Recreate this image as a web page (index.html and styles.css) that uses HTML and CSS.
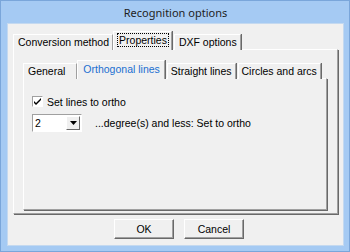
FILE: index.html
```html
<!DOCTYPE html>
<html lang="en">
<head>
    <meta charset="UTF-8">
    <title>Recognition options</title>
    <link rel="stylesheet" href="styles.css">
</head>
<body>
    <div class="window">
        <div class="titlebar">Recognition options</div>
        <div class="client">
            <div class="tabs outer-tabs">
                <div class="tab first">Conversion method</div>
                <div class="tab active"><span class="focus">Properties</span></div>
                <div class="tab">DXF options</div>
            </div>
            <div class="panel outer-panel">
                <div class="tabs inner-tabs">
                    <div class="tab first">General</div>
                    <div class="tab active blue">Orthogonal lines</div>
                    <div class="tab">Straight lines</div>
                    <div class="tab">Circles and arcs</div>
                </div>
                <div class="panel inner-panel">
                    <label class="check-row">
                        <span class="checkbox">
                            <svg width="9" height="9" viewBox="0 0 9 9"><path d="M1 4 L3 6 L8 1 L8 3 L3 8 L1 6 Z" fill="#000"/></svg>
                        </span>
                        Set lines to ortho
                    </label>
                    <div class="combo-row">
                        <div class="combo">
                            <span class="combo-value">2</span>
                            <span class="combo-btn">
                                <svg width="7" height="4" viewBox="0 0 7 4"><path d="M0 0 H7 L3.5 4 Z" fill="#000"/></svg>
                            </span>
                        </div>
                        <span class="combo-label">...degree(s) and less: Set to ortho</span>
                    </div>
                </div>
            </div>
            <div class="buttons">
                <div class="button">OK</div>
                <div class="button">Cancel</div>
            </div>
        </div>
    </div>
</body>
</html>
```

FILE: styles.css
```css
body {
    margin: 0;
    font-family: "Liberation Sans", Arial, sans-serif;
    font-size: 10.5px;
    color: #000;
}
.window {
    width: 350px;
    height: 252px;
    box-sizing: border-box;
    background-color: #a5caf3;
    border: 1px solid #7aa6da;
    padding: 0 5px 5px 6px;
    display: flex;
    flex-direction: column;
}
.titlebar {
    height: 22px;
    line-height: 23px;
    text-align: center;
    font-family: "Noto Sans", sans-serif;
    font-size: 11px;
    color: #1e1e1e;
    flex-shrink: 0;
}
.client {
    flex: 1;
    background-color: #f0f0f0;
    border: 1px solid #c4d9f0;
    padding: 9px 0 0 5px;
    display: flex;
    flex-direction: column;
}
.tabs {
    display: flex;
    height: 17px;
    align-items: flex-end;
    position: relative;
    z-index: 1;
    margin-bottom: -1px;
    flex-shrink: 0;
}
.tab {
    height: 15px;
    line-height: 15px;
    padding: 0 4px;
    border-top: 1px solid #fff;
    border-left: 1px solid #fff;
    border-right: 1px solid #a0a0a0;
    box-shadow: 1px 0 0 #696969;
    margin-right: 2px;
    background-color: #f0f0f0;
    white-space: nowrap;
}
.tab.active {
    height: 18px;
    line-height: 17px;
    margin: 0 2px 0 -2px;
    padding: 0 3px 0 4px;
}
.outer-tabs .tab {
    padding: 0 3px 0 4px;
}
.tab.blue {
    color: #1a6fd1;
}
.focus {
    outline: 1px dotted #000;
    outline-offset: 0;
    padding: 0 1px;
}
.panel {
    border-top: 1px solid #fff;
    border-left: 1px solid #fff;
    border-right: 1px solid #a0a0a0;
    border-bottom: 1px solid #a0a0a0;
    box-shadow: 1px 1px 0 #696969;
    box-sizing: border-box;
    flex-shrink: 0;
}
.outer-panel {
    width: 325px;
    height: 165px;
    padding: 12px 0 0 9px;
}
.inner-tabs .tab {
    padding: 0 3px 0 3px;
}
.inner-tabs .tab.first {
    padding-left: 4px;
    padding-right: 11px;
}
.inner-tabs .tab.active {
    padding: 0 4px 0 5px;
}
.inner-panel {
    width: 304px;
    height: 132px;
    padding: 16px 0 0 8px;
}
.check-row {
    display: flex;
    align-items: center;
    height: 13px;
}
.checkbox {
    width: 11px;
    height: 11px;
    box-sizing: border-box;
    border: 1px solid #fff;
    border-top-color: #a0a0a0;
    border-left-color: #a0a0a0;
    background-color: #fff;
    margin-right: 4px;
    display: flex;
    align-items: center;
    justify-content: center;
}
.combo-row {
    display: flex;
    align-items: center;
    margin-top: 6px;
}
.combo {
    width: 50px;
    height: 18px;
    box-sizing: border-box;
    background-color: #fff;
    border: 1px solid #a0a0a0;
    border-right-color: #fff;
    border-bottom-color: #fff;
    display: flex;
    align-items: center;
    margin-right: 13px;
}
.combo-value {
    flex: 1;
    padding-left: 2px;
}
.combo-btn {
    width: 14px;
    height: 14px;
    box-sizing: border-box;
    margin-right: 1px;
    background-color: #f0f0f0;
    border: 1px solid #fff;
    border-right-color: #696969;
    border-bottom-color: #696969;
    display: flex;
    align-items: center;
    justify-content: center;
}
.buttons {
    display: flex;
    justify-content: center;
    gap: 10px;
    margin-top: 5px;
    padding-left: 2px;
}
.button {
    width: 60px;
    height: 20px;
    line-height: 18px;
    box-sizing: border-box;
    text-align: center;
    border: 1px solid #fff;
    border-right-color: #696969;
    border-bottom-color: #696969;
    box-shadow: inset -1px -1px 0 #a0a0a0;
    background-color: #f0f0f0;
}
```
